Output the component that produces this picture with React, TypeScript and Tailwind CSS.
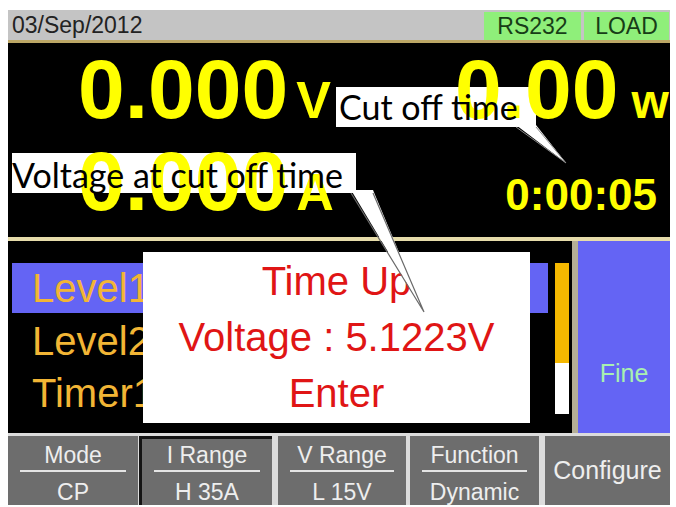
const softKeys = [
  { top: "Mode", bottom: "CP", cls: "w-[130px] pt-[8px]" },
  { top: "I Range", bottom: "H 35A", cls: "ml-[1px] w-[133px] border-l-[3px] border-t-[3px] border-[#141414] pt-[5px]" },
  { top: "V Range", bottom: "L 15V", cls: "ml-[6px] w-[128px] pt-[8px]" },
  { top: "Function", bottom: "Dynamic", cls: "ml-[4px] w-[129px] pt-[8px]" },
];

function TopBar() {
  return (
    <div className="flex h-[30px] bg-[#c4c4c4] text-[23px] leading-[30px]">
      <span className="pl-[4px] text-[#222]">03/Sep/2012</span>
      <span className="ml-auto mt-[2px] h-[28px] w-[97px] bg-[#8fef7a] text-center leading-[28px] text-[#173d17]">
        RS232
      </span>
      <span className="mr-[1px] ml-[3px] mt-[2px] h-[28px] w-[85px] bg-[#8fef7a] text-center leading-[28px] text-[#173d17]">
        LOAD
      </span>
    </div>
  );
}

function Readings() {
  return (
    <div className="relative h-[194px] bg-black pt-[4px] font-bold text-[#ffff00]">
      {/* callout boxes sit under the digits, their text over them */}
      <div className="absolute left-[328px] top-[44px] h-[40px] w-[200px] bg-white pl-[3px]">
        <span className="relative z-20 block font-['Lato',sans-serif] text-[34px] font-normal leading-[40px] whitespace-nowrap text-black">
          Cut off time
        </span>
      </div>
      <div className="absolute left-[4px] top-[110px] h-[40px] w-[344px] bg-white pt-[2px]">
        <span className="relative z-20 block font-['Lato',sans-serif] text-[34px] font-normal leading-[40px] whitespace-nowrap text-black">
          Voltage at cut off time
        </span>
      </div>

      <div className="relative z-10 flex items-baseline">
        <div className="flex w-[447px] items-baseline pl-[70px]">
          <span className="text-[84px] leading-[84px]">0.000</span>
          <span className="ml-[8px] text-[52px] leading-none">V</span>
        </div>
        <span className="text-[84px] leading-[84px]">0.00</span>
        <span className="ml-[13px] text-[48px] leading-none">w</span>
      </div>
      <div className="relative z-10 mt-[8px] flex items-baseline">
        <div className="flex w-[447px] items-baseline pl-[70px]">
          <span className="text-[84px] leading-[84px]">0.000</span>
          <span className="ml-[8px] text-[52px] leading-none">A</span>
        </div>
        <span className="ml-auto mr-[13px] text-[44px] leading-none">0:00:05</span>
      </div>
    </div>
  );
}

function Middle() {
  return (
    <div className="relative flex h-[192px]">
      <div className="flex w-[564px] bg-black pt-[22px] pl-[4px] text-[40px] text-[#f2b535]">
        <div className="w-[536px]">
          <div className="h-[50px] bg-[#6464f4] pl-[20px] leading-[50px]">Level1</div>
          <div className="mt-[2px] h-[52px] pl-[20px] leading-[52px]">Level2</div>
          <div className="h-[52px] pl-[20px] leading-[52px]">Timer1</div>
        </div>
        <div className="ml-[7px] flex w-[14px] flex-col">
          <div className="h-[100px] bg-[#f5b800]" />
          <div className="h-[51px] bg-white" />
        </div>
      </div>
      <div className="w-[6px] bg-[#b4ae96]" />
      <div className="flex-1 bg-[#6464f4] pt-[120px] text-center text-[25px] leading-[25px] text-[#a8f0b0]">
        Fine
      </div>

      <div className="absolute left-[135px] top-[11px] h-[171px] w-[387px] bg-white pt-px text-center text-[40px] leading-[56px] text-[#e01515]">
        <div>Time Up</div>
        <div>Voltage : 5.1223V</div>
        <div>Enter</div>
      </div>
    </div>
  );
}

function SoftKeys() {
  return (
    <div className="flex h-[69px] bg-[#dcdcdc] text-[23px] leading-[23px] text-[#eeeeee]">
      {softKeys.map((k) => (
        <div key={k.top} className={`flex flex-col items-stretch bg-[#6d6d6d] text-center ${k.cls}`}>
          <span>{k.top}</span>
          <span className="mx-[12px] mt-[3px] h-[2px] bg-[#e4e4e4]" />
          <span className="mt-[9px]">{k.bottom}</span>
        </div>
      ))}
      <div className="ml-[6px] flex w-[125px] items-center justify-center bg-[#6d6d6d] text-[25px]">
        Configure
      </div>
    </div>
  );
}

function Pointers() {
  return (
    <svg
      className="pointer-events-none absolute left-0 top-0 z-30"
      width="662"
      height="497"
      viewBox="0 0 662 497"
    >
      <polygon points="508,115 528,115 558,153" fill="#fff" />
      <path d="M508,117 L558,153 L528,117" fill="none" stroke="#8a8a8a" strokeWidth="1" />
      <polygon points="343,180 365,180 416,302" fill="#fff" />
      <path d="M343,183 L416,302 L365,183" fill="none" stroke="#6a6a6a" strokeWidth="1.2" />
    </svg>
  );
}

export default function App() {
  return (
    <div className="min-h-screen bg-white pt-[10px] pl-[8px]">
      <div className="relative w-[662px] font-['Liberation_Sans',Arial,sans-serif]">
        <TopBar />
        <div className="h-[3px] bg-[#bca766]" />
        <Readings />
        <div className="h-[4px] bg-[#e6dcaa]" />
        <Middle />
        <div className="h-[3px] bg-[#dcdcdc]" />
        <SoftKeys />
        <Pointers />
      </div>
    </div>
  );
}
